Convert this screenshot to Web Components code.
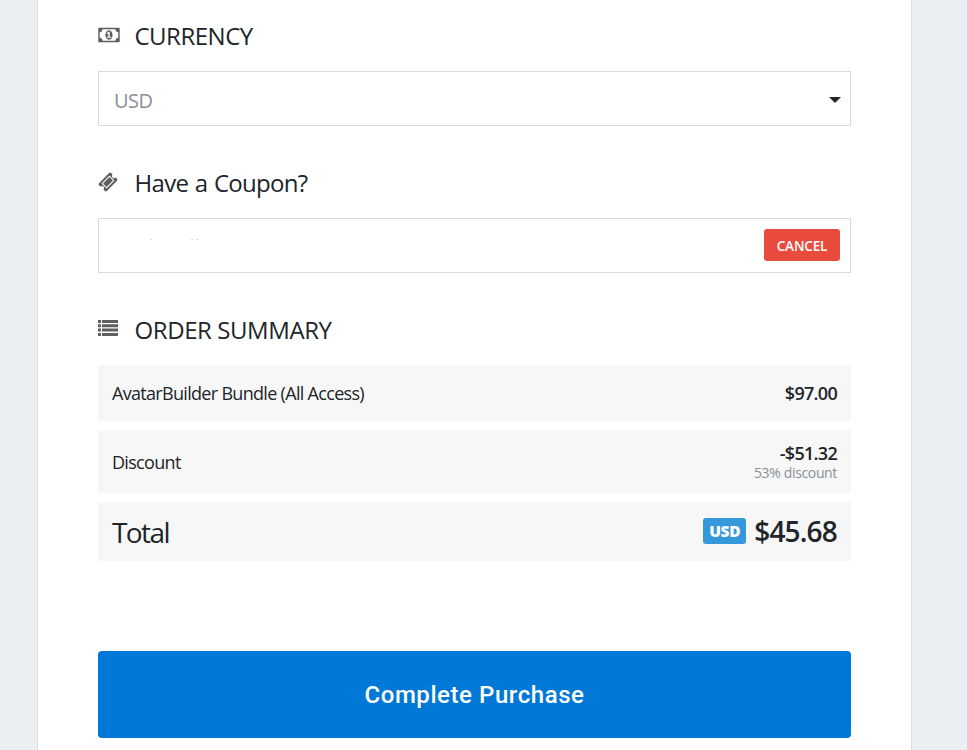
<!DOCTYPE html>
<html lang="en">
<head>
<meta charset="utf-8">
<title>Checkout</title>
<style>
  body {
    margin: 0;
    background-color: #ebeff4;
    color: #212529;
    font-family: "Open Sans", "Noto Sans", sans-serif;
    overflow: hidden;
  }
</style>
</head>
<body>
<checkout-card>
  <section-title icon="money" style="--spacing: -0.5px">CURRENCY</section-title>
  <currency-select>USD</currency-select>
  <section-title icon="ticket" style="--spacing: -0.7px; --words: 1px">Have a Coupon?</section-title>
  <coupon-field>CANCEL</coupon-field>
  <section-title icon="list" style="--spacing: -0.42px">ORDER SUMMARY</section-title>
  <order-summary>
    <order-row style="--height: 56px">
      AvatarBuilder Bundle (All Access)
      <span slot="price">$97.00</span>
    </order-row>
    <order-row style="--height: 63px">
      Discount
      <span slot="price">-$51.32</span>
      <span slot="note">53% discount</span>
    </order-row>
    <order-row total style="--height: 59px">
      Total
      <span slot="badge">USD</span>
      <span slot="price">$45.68</span>
    </order-row>
  </order-summary>
  <purchase-button>Complete Purchase</purchase-button>
</checkout-card>

<script>
const icons = {
  money: `<svg width="22" height="20" viewBox="0 0 1920 1792"><path d="M768 1152h384v-96h-128v-448h-114l-148 137 77 80q42-37 55-57h2v288h-128v96zm512-256q0 70-21 142t-59.5 134-101.5 101-138 39-138-39-101.5-101-59.5-134-21-142 21-142 59.5-134 101.5-101 138-39 138 39 101.5 101 59.5 134 21 142zm512 256v-512q-106 0-181-75t-75-181h-1152q0 106-75 181t-181 75v512q106 0 181 75t75 181h1152q0-106 75-181t181-75zm128-832v1152q0 26-19 45t-45 19h-1792q-26 0-45-19t-19-45v-1152q0-26 19-45t45-19h1792q26 0 45 19t19 45z"/></svg>`,
  ticket: `<svg width="20" height="20" viewBox="0 0 1792 1792"><path d="M1024 452l316 316-572 572-316-316zm-211 979l618-618q19-19 19-45t-19-45l-362-362q-18-18-45-18t-45 18l-618 618q-19 19-19 45t19 45l362 362q18 18 45 18t45-18zm889-637l-907 908q-37 37-90.5 37t-90.5-37l-126-125q56-56 56-136t-56-136-136-56-136 56l-125-126q-37-37-37-90.5t37-90.5l907-906q37-37 90.5-37t90.5 37l125 125q-56 56-56 136t56 136 136 56 136-56l126 125q37 37 37 90.5t-37 90.5z"/></svg>`,
  list: `<svg width="20" height="20" viewBox="0 0 20 20"><path d="M0 1h3v3H0zM4 1h16v3H4zM0 5.3h3v3H0zM4 5.3h16v3H4zM0 9.6h3v3H0zM4 9.6h16v3H4zM0 14h3v3H0zM4 14h16v3H4z"/></svg>`
};

class CheckoutCard extends HTMLElement {
  constructor() {
    super();
    this.attachShadow({mode: 'open'}).innerHTML = `
      <style>
        :host {
          display: flex;
          flex-direction: column;
          box-sizing: border-box;
          width: 875px;
          height: 750px;
          margin-left: 37px;
          padding: 19px 60px 0;
          background-color: #fff;
          border: solid #dadfe3;
          border-width: 0 1px;
        }
      </style>
      <slot></slot>
    `;
  }
}

class SectionTitle extends HTMLElement {
  connectedCallback() {
    this.attachShadow({mode: 'open'}).innerHTML = `
      <style>
        :host {
          display: flex;
          height: 52px;
          font-size: 24px;
          line-height: 33px;
          letter-spacing: var(--spacing);
          word-spacing: var(--words, 0);
        }

        .icon {
          width: 36.5px;
          padding-top: 6px;
          line-height: 0;
        }

        svg {
          fill: #5e5e5e;
        }
      </style>
      <span class="icon">${icons[this.getAttribute('icon')]}</span>
      <span><slot></slot></span>
    `;
  }
}

class CurrencySelect extends HTMLElement {
  constructor() {
    super();
    this.attachShadow({mode: 'open'}).innerHTML = `
      <style>
        :host {
          display: flex;
          align-items: center;
          justify-content: space-between;
          box-sizing: border-box;
          height: 55px;
          margin-bottom: 40px;
          padding: 0 9px 0 15px;
          border: 1px solid #dadada;
          color: #86909a;
          font-size: 20px;
          letter-spacing: -0.5px;
        }

        span {
          padding-top: 3px;
        }

        svg {
          padding-top: 2px;
          fill: #212529;
        }
      </style>
      <span><slot></slot></span>
      <svg width="12" height="6" viewBox="0 0 12 6"><path d="M0 0h12L6 6z"/></svg>
    `;
  }
}

class CouponField extends HTMLElement {
  constructor() {
    super();
    this.attachShadow({mode: 'open'}).innerHTML = `
      <style>
        :host {
          display: flex;
          align-items: flex-start;
          justify-content: space-between;
          box-sizing: border-box;
          height: 55px;
          margin-bottom: 40px;
          padding: 0 10px;
          border: 1px solid #dadada;
        }

        button {
          width: 76px;
          height: 32px;
          margin-top: 10px;
          padding: 2px 0 0;
          border: 0;
          border-radius: 3px;
          background-color: #e94c3d;
          color: #fff;
          font: 600 13.5px "Open Sans", sans-serif;
          letter-spacing: -0.15px;
        }
      </style>
      <svg width="120" height="53" fill="#ddd"><path d="M41 20h2v1h-2zM82 20h2v1h-2zM87 20h2v1h-2z"/></svg>
      <button type="button"><slot></slot></button>
    `;
  }
}

class OrderSummary extends HTMLElement {
  constructor() {
    super();
    this.attachShadow({mode: 'open'}).innerHTML = `
      <style>
        :host {
          display: flex;
          flex-direction: column;
          gap: 9px;
          margin-bottom: 90px;
        }
      </style>
      <slot></slot>
    `;
  }
}

class OrderRow extends HTMLElement {
  constructor() {
    super();
    this.attachShadow({mode: 'open'}).innerHTML = `
      <style>
        :host {
          display: flex;
          align-items: center;
          justify-content: space-between;
          box-sizing: border-box;
          height: var(--height);
          padding: 0 14px;
          background-color: #f7f7f7;
          font-size: 18px;
          letter-spacing: -0.69px;
        }

        .amount {
          display: flex;
          align-items: center;
          gap: 8px;
        }

        .values {
          display: flex;
          flex-direction: column;
          align-items: flex-end;
          padding-top: 1px;
          line-height: 21px;
        }

        ::slotted([slot="price"]) {
          font-weight: 600;
          letter-spacing: -0.7px;
        }

        ::slotted([slot="note"]) {
          color: #86909a;
          font-size: 14px;
          line-height: 18px;
          letter-spacing: -0.35px;
        }

        ::slotted([slot="badge"]) {
          box-sizing: border-box;
          width: 43px;
          height: 26px;
          border-radius: 3px;
          background-color: #3498db;
          color: #fff;
          font-size: 15.5px;
          font-weight: 800;
          line-height: 27px;
          letter-spacing: -0.4px;
          text-align: center;
        }

        :host([total]) {
          padding-bottom: 2px;
          font-size: 28px;
          letter-spacing: -1.6px;
        }

        :host([total]) .label {
          padding-top: 2px;
        }

        :host([total]) .values {
          padding: 0;
          line-height: 38px;
        }

        :host([total]) ::slotted([slot="price"]) {
          letter-spacing: -0.82px;
        }
      </style>
      <span class="label"><slot></slot></span>
      <div class="amount">
        <slot name="badge"></slot>
        <div class="values">
          <slot name="price"></slot>
          <slot name="note"></slot>
        </div>
      </div>
    `;
  }
}

class PurchaseButton extends HTMLElement {
  constructor() {
    super();
    this.attachShadow({mode: 'open'}).innerHTML = `
      <style>
        :host {
          display: flex;
        }

        button {
          flex: 1;
          height: 87px;
          padding: 0;
          border: 0;
          border-radius: 4px;
          background-color: #0078d7;
          color: #fff;
          font: 500 24px Roboto, sans-serif;
          letter-spacing: 0.57px;
        }
      </style>
      <button type="submit"><slot></slot></button>
    `;
  }
}

customElements.define('checkout-card', CheckoutCard);
customElements.define('section-title', SectionTitle);
customElements.define('currency-select', CurrencySelect);
customElements.define('coupon-field', CouponField);
customElements.define('order-summary', OrderSummary);
customElements.define('order-row', OrderRow);
customElements.define('purchase-button', PurchaseButton);
</script>
</body>
</html>
